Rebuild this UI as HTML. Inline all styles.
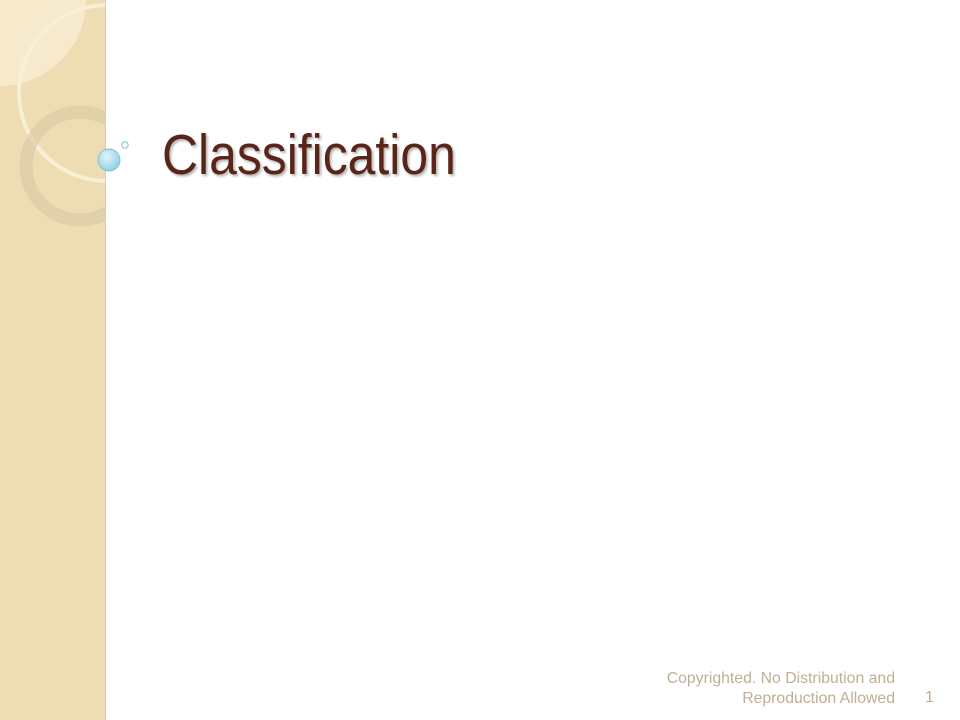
<!DOCTYPE html>
<html><head><meta charset="utf-8"><style>
html,body{margin:0;padding:0;width:960px;height:720px;overflow:hidden;background:#fff;font-family:"Liberation Sans",sans-serif}
.side{position:absolute;left:0;top:0;width:105px;height:720px;background:#eedcb2;border-right:1px solid #d9ccb4}
.title{position:absolute;left:162px;top:122px;font-size:57px;color:#5a2418;transform:scaleX(0.875);transform-origin:0 0;text-shadow:2px 2px 3px rgba(0,0,0,0.3);white-space:nowrap;line-height:66px}
.foot{position:absolute;right:65px;top:669px;font-size:15.8px;color:#bfaf94;text-align:right;line-height:20px}
.num{position:absolute;left:925px;top:689px;font-size:16px;color:#bfaf94}
</style></head><body>
<div class="side"></div>
<svg width="140" height="240" style="position:absolute;left:0;top:0">
<defs><clipPath id="c"><rect x="0" y="0" width="105" height="240"/></clipPath>
<radialGradient id="b" cx="0.4" cy="0.35" r="0.7"><stop offset="0" stop-color="#e4f4fa"/><stop offset="1" stop-color="#8ccde2"/></radialGradient></defs>
<g clip-path="url(#c)">
<circle cx="0" cy="0" r="86" fill="#f7e9cc"/>
<circle cx="107" cy="93" r="88" fill="none" stroke="#f8efd8" stroke-width="4"/>
<circle cx="80" cy="166" r="54" fill="none" stroke="#dccca8" stroke-width="13" opacity="0.7"/>
</g>
<circle cx="109" cy="160" r="11" fill="url(#b)" stroke="#7fc3da" stroke-width="1"/>
<circle cx="125" cy="145" r="3.2" fill="none" stroke="#7fbfd4" stroke-width="1"/>
</svg>
<div class="title">Classification</div>
<div class="foot">Copyrighted. No Distribution and<br>Reproduction Allowed</div>
<div class="num">1</div>
</body></html>
